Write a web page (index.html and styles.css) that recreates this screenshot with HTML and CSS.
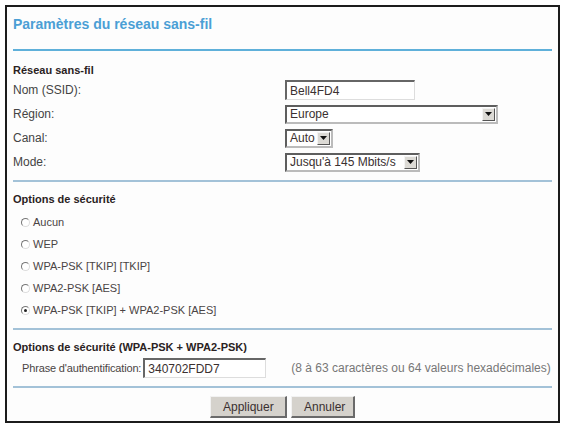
FILE: index.html
```html
<!DOCTYPE html>
<html lang="fr">

<head>
  <meta charset="UTF-8">
  <title>Paramètres du réseau sans-fil</title>
  <link rel="stylesheet" href="styles.css">
</head>

<body>
  <div class="frame">
    <div class="title">Paramètres du réseau sans-fil</div>
    <div class="rule rule-main"></div>

    <div class="heading first">Réseau sans-fil</div>
    <div class="row">
      <span class="label">Nom (SSID):</span>
      <span class="textbox ssid">Bell4FD4</span>
    </div>
    <div class="row">
      <span class="label">Région:</span>
      <span class="select region"><span class="value">Europe</span><span class="arrow"><svg width="7" height="4" viewBox="0 0 7 4"><path d="M0 0H7L3.5 4Z" fill="#111"/></svg></span></span>
    </div>
    <div class="row">
      <span class="label">Canal:</span>
      <span class="select canal"><span class="value">Auto</span><span class="arrow"><svg width="7" height="4" viewBox="0 0 7 4"><path d="M0 0H7L3.5 4Z" fill="#111"/></svg></span></span>
    </div>
    <div class="row">
      <span class="label">Mode:</span>
      <span class="select mode"><span class="value">Jusqu'à 145 Mbits/s</span><span class="arrow"><svg width="7" height="4" viewBox="0 0 7 4"><path d="M0 0H7L3.5 4Z" fill="#111"/></svg></span></span>
    </div>
    <div class="rule rule-one"></div>

    <div class="heading">Options de sécurité</div>
    <div class="radios">
      <div class="radio-row"><span class="radio"></span>Aucun</div>
      <div class="radio-row"><span class="radio"></span>WEP</div>
      <div class="radio-row"><span class="radio"></span>WPA-PSK [TKIP] [TKIP]</div>
      <div class="radio-row"><span class="radio"></span>WPA2-PSK [AES]</div>
      <div class="radio-row"><span class="radio checked"></span>WPA-PSK [TKIP] + WPA2-PSK [AES]</div>
    </div>
    <div class="rule rule-two"></div>

    <div class="heading">Options de sécurité (WPA-PSK + WPA2-PSK)</div>
    <div class="pass-row">
      <span class="pass-label">Phrase d'authentification:</span>
      <span class="textbox pass">340702FDD7</span>
      <span class="hint">(8 à 63 caractères ou 64 valeurs hexadécimales)</span>
    </div>
    <div class="rule rule-three"></div>

    <div class="buttons">
      <button type="button" class="btn">Appliquer</button>
      <button type="button" class="btn">Annuler</button>
    </div>
  </div>
</body>
</html>
```

FILE: styles.css
```css
body {
  margin: 0;
  background-color: #fff;
  font-family: "Liberation Sans", Arial, sans-serif;
  color: #444;
}

.frame {
  box-sizing: border-box;
  width: 555px;
  height: 418px;
  margin: 5px 5px 0 5px;
  padding: 0 6px;
  border: 2px solid #1c1c1c;
  background-color: #fdfdfd;
}

.title {
  height: 33px;
  padding-top: 9px;
  font-size: 14px;
  line-height: 16px;
  font-weight: bold;
  color: #4b9fd5;
}

.rule {
  height: 2px;
  background-color: #a3c2d8;
}

.rule-main {
  background-color: #5fb0da;
}

.rule-one {
  margin-top: 6px;
}

.rule-two {
  margin-top: 7px;
}

.rule-three {
  margin-top: 7px;
}

.heading {
  margin-top: 9px;
  height: 16px;
  font-size: 11px;
  line-height: 16px;
  font-weight: bold;
  color: #2a2222;
}

.heading.first {
  margin-top: 11px;
}

.row {
  display: flex;
  align-items: center;
  height: 24px;
  font-size: 12px;
}

.label {
  width: 272px;
  flex-shrink: 0;
}

.textbox {
  box-sizing: border-box;
  display: flex;
  align-items: center;
  height: 20px;
  padding-left: 3px;
  border-top: 2px solid #666;
  border-left: 2px solid #666;
  border-right: 1px solid #ddd;
  border-bottom: 1px solid #ddd;
  background-color: #fff;
  font-size: 12px;
  color: #3a3030;
}

.ssid {
  width: 130px;
}

.select {
  box-sizing: border-box;
  display: flex;
  align-items: center;
  justify-content: space-between;
  height: 19px;
  padding: 0 1px 0 3px;
  border: 2px solid #5e5e5e;
  border-right-color: #bbb;
  border-bottom-color: #bbb;
  background-color: #fff;
  font-size: 12px;
  color: #3a3030;
}

.region {
  width: 213px;
}

.canal {
  width: 48px;
}

.mode {
  width: 135px;
}

.arrow {
  display: flex;
  align-items: center;
  justify-content: center;
  box-sizing: border-box;
  width: 13px;
  height: 13px;
  background-color: #dcdad5;
  border: 1px solid #f4f4f4;
  border-right-color: #555;
  border-bottom-color: #555;
}

.radios {
  margin-top: 4px;
}

.radio-row {
  display: flex;
  align-items: center;
  height: 22px;
  padding-left: 8px;
  font-size: 11px;
  color: #4a4444;
}

.radio {
  box-sizing: border-box;
  position: relative;
  width: 9px;
  height: 9px;
  margin-right: 3px;
  border-radius: 50%;
  border: 1px solid #777;
  border-right-color: #ddd;
  border-bottom-color: #ddd;
  background-color: #fff;
}

.radio.checked::after {
  content: "";
  position: absolute;
  left: 2px;
  top: 2px;
  width: 3px;
  height: 3px;
  border-radius: 50%;
  background-color: #222;
}

.pass-row {
  display: flex;
  align-items: center;
  height: 22px;
  margin-top: 2px;
  padding-left: 9px;
  font-size: 11px;
  color: #4a4444;
}

.pass-label {
  white-space: nowrap;
  letter-spacing: -0.15px;
  margin-right: 2px;
}

.pass {
  width: 123px;
}

.hint {
  margin-left: 25px;
  white-space: nowrap;
  font-size: 12px;
  color: #777;
}

.buttons {
  display: flex;
  justify-content: center;
  gap: 4px;
  margin-top: 8px;
}

.btn {
  box-sizing: border-box;
  height: 22px;
  padding: 0 12px;
  border: 1px solid #f2f2f2;
  border-right: 2px solid #6a6a6a;
  border-bottom: 2px solid #6a6a6a;
  background-color: #d5d2cc;
  font-family: "Liberation Sans", Arial, sans-serif;
  font-size: 12px;
  color: #3a3030;
}

.btn:first-child {
  width: 77px;
}

.btn:last-child {
  width: 64px;
}
```
